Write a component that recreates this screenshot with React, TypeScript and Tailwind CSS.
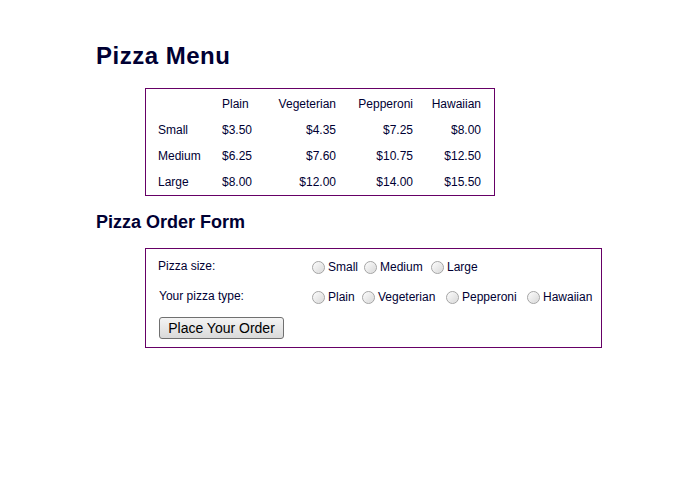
const prices = [
  { size: 'Small', values: ['$3.50', '$4.35', '$7.25', '$8.00'] },
  { size: 'Medium', values: ['$6.25', '$7.60', '$10.75', '$12.50'] },
  { size: 'Large', values: ['$8.00', '$12.00', '$14.00', '$15.50'] },
];

const sizeOptions = [
  { label: 'Small', w: 'w-[52px]' },
  { label: 'Medium', w: 'w-[67px]' },
  { label: 'Large', w: '' },
];

const typeOptions = [
  { label: 'Plain', w: 'w-[50px]' },
  { label: 'Vegeterian', w: 'w-[84px]' },
  { label: 'Pepperoni', w: 'w-[81px]' },
  { label: 'Hawaiian', w: '' },
];

function Radio({ label, w }: { label: string; w: string }) {
  return (
    <label className={`flex items-center shrink-0 ${w}`}>
      <span className="w-[13px] h-[13px] rounded-full border border-[#a4a4a4] bg-gradient-to-br from-[#fdfdfd] to-[#d8d8d8] shadow-[inset_0_0_1px_#fff]" />
      <span className="ml-[3px]">{label}</span>
    </label>
  );
}

export default function App() {
  return (
    <div className="w-[700px] h-[500px] bg-white pl-[96px] pt-[42px] text-[#000033] text-[12px] font-['Liberation_Sans',Arial,sans-serif]">
      <h1 className="text-[24px] leading-[28px] font-bold tracking-[0.5px]">Pizza Menu</h1>

      {/* price table */}
      <div className="ml-[49px] mt-[18px] w-[350px] border border-[#660066] pl-[12px] pr-[13px] pt-[2px]">
        <div className="flex h-[26px] items-center">
          <div className="w-[64px]" />
          <div className="w-[40px]">Plain</div>
          <div className="w-[74px] text-right">Vegeterian</div>
          <div className="w-[77px] text-right">Pepperoni</div>
          <div className="w-[68px] text-right">Hawaiian</div>
        </div>
        {prices.map((row) => (
          <div key={row.size} className="flex h-[26px] items-center">
            <div className="w-[64px]">{row.size}</div>
            <div className="w-[40px]">{row.values[0]}</div>
            <div className="w-[74px] text-right">{row.values[1]}</div>
            <div className="w-[77px] text-right">{row.values[2]}</div>
            <div className="w-[68px] text-right">{row.values[3]}</div>
          </div>
        ))}
      </div>

      <h2 className="mt-[15px] text-[18px] leading-[22px] font-bold">Pizza Order Form</h2>

      {/* order form */}
      <form className="ml-[49px] mt-[15px] w-[457px] h-[100px] border border-[#660066] pl-[12px] pt-[6px]">
        <div className="flex h-[24px] items-center">
          <div className="w-[154px] -mt-[2px]">Pizza size:</div>
          {sizeOptions.map((o) => (
            <Radio key={o.label} label={o.label} w={o.w} />
          ))}
        </div>
        <div className="flex h-[24px] items-center mt-[6px]">
          <div className="w-[154px] pl-px -mt-[2px]">Your pizza type:</div>
          {typeOptions.map((o) => (
            <Radio key={o.label} label={o.label} w={o.w} />
          ))}
        </div>
        <button
          type="button"
          className="mt-[8px] ml-px w-[125px] h-[22px] rounded-[3px] border border-[#707070] bg-gradient-to-b from-[#f4f4f4] to-[#dadada] text-[14px] leading-none text-black"
        >
          Place Your Order
        </button>
      </form>
    </div>
  );
}
